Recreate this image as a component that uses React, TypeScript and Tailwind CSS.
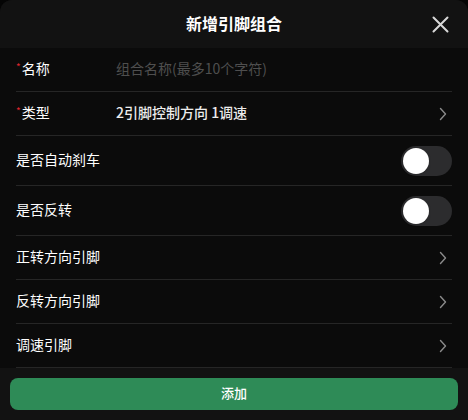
import React from "react";

const font = { fontFamily: '"Noto Sans CJK SC", "Noto Sans", sans-serif' };

function Chevron() {
  return (
    <svg width="8" height="14" viewBox="0 0 8 14" fill="none" className="shrink-0 mr-[5px]">
      <path d="M1.5 1.5 L6.5 7 L1.5 12.5" stroke="#8a8a8a" strokeWidth="1.4" strokeLinecap="round" strokeLinejoin="round" />
    </svg>
  );
}

function Toggle() {
  return (
    <div className="w-[51px] h-[30px] rounded-full bg-[#2c2c2e] p-[2px] flex items-center">
      <div className="w-[26px] h-[26px] rounded-full bg-white shadow" />
    </div>
  );
}

function Row({ children, h = "h-[44px]" }: { children: React.ReactNode; h?: string }) {
  return <div className={`${h} flex items-center border-b border-[#262626]`}>{children}</div>;
}

export default function App() {
  return (
    <div className="w-[468px] h-[420px] bg-[#050505] text-white" style={font}>
      <div className="w-full h-full rounded-t-xl overflow-hidden flex flex-col bg-[#0b0b0b]">
        <div className="h-[48px] bg-[#121212] relative flex items-center justify-center shrink-0">
          <span className="text-[16px] font-bold text-white mb-[2px]">新增引脚组合</span>
          <svg className="absolute right-[19px] top-[16px]" width="17" height="17" viewBox="0 0 17 17">
            <path d="M1.5 1.5 L15.5 15.5 M15.5 1.5 L1.5 15.5" stroke="#d8d8d8" strokeWidth="2" strokeLinecap="round" />
          </svg>
        </div>
        <div className="flex-1 px-4 text-sm">
          <Row>
            <div className="w-[100px] flex items-center mb-[3px]">
              <span className="text-[#e0252f] text-[10px] mr-[1px] mt-[-2px]">*</span>
              <span>名称</span>
            </div>
            <span className="text-[#4f4f4f] mb-[3px]">组合名称(最多10个字符)</span>
          </Row>
          <Row>
            <div className="w-[100px] flex items-center mb-[3px]">
              <span className="text-[#e0252f] text-[10px] mr-[1px] mt-[-2px]">*</span>
              <span>类型</span>
            </div>
            <span className="flex-1 font-medium text-[#ededed] mb-[3px]">2引脚控制方向 1调速</span>
            <Chevron />
          </Row>
          <Row h="h-[50px]">
            <span className="flex-1 mb-[3px]">是否自动刹车</span>
            <Toggle />
          </Row>
          <Row h="h-[50px]">
            <span className="flex-1 mb-[3px]">是否反转</span>
            <Toggle />
          </Row>
          <Row>
            <span className="flex-1 mb-[3px]">正转方向引脚</span>
            <Chevron />
          </Row>
          <Row>
            <span className="flex-1 mb-[3px]">反转方向引脚</span>
            <Chevron />
          </Row>
          <Row>
            <span className="flex-1 mb-[3px]">调速引脚</span>
            <Chevron />
          </Row>
        </div>
        <div className="h-[52px] bg-[#121212] px-[10px] pt-[10px] shrink-0">
          <button className="w-full h-[32px] rounded-lg bg-[#2e8b57] text-white text-[13px] font-medium">
            <span className="block mb-[2px]">添加</span>
          </button>
        </div>
      </div>
    </div>
  );
}
